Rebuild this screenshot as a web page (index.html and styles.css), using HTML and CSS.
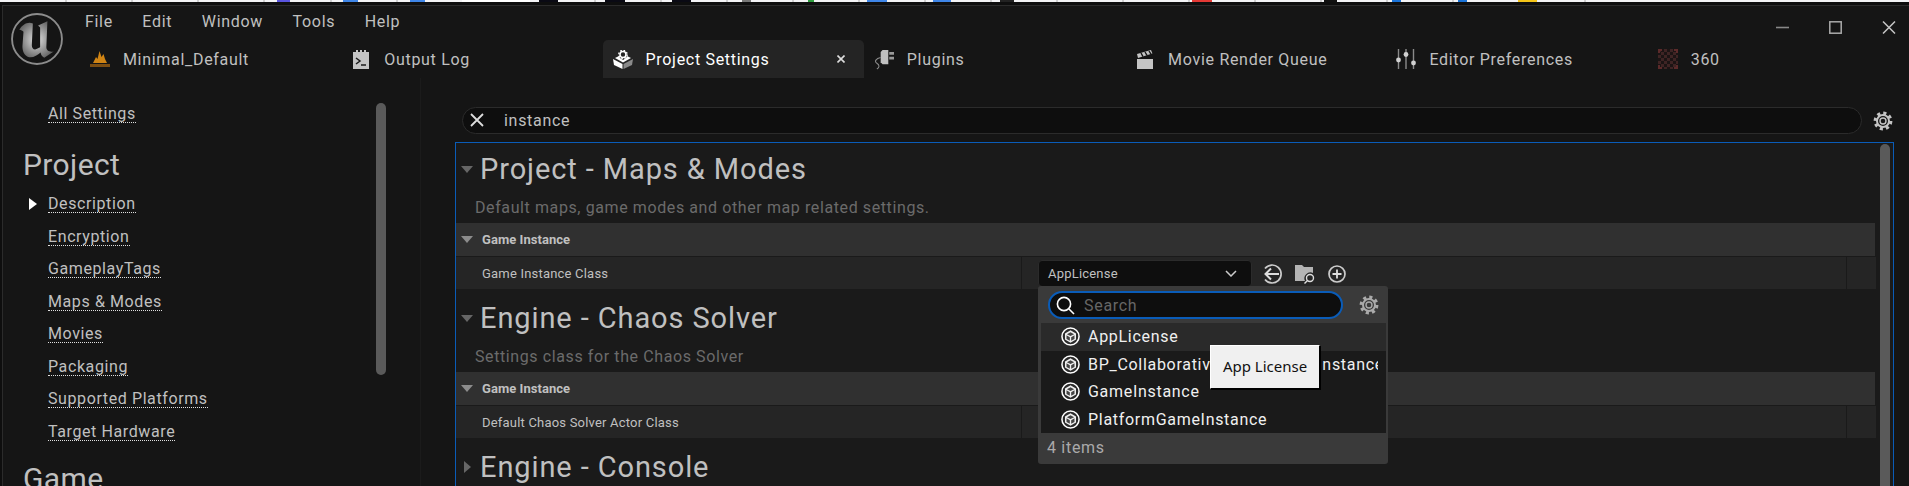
FILE: index.html
```html
<!DOCTYPE html>
<html lang="en">
  <head>
    <meta charset="UTF-8" />
    <title>Project Settings</title>
    <link rel="stylesheet" href="styles.css">
  </head>
  <body>
    <svg width="0" height="0" class="defs">
      <defs>
        <symbol id="gear" viewBox="0 0 20 20">
          <circle cx="10" cy="10" r="7.6" fill="none" stroke="currentColor" stroke-width="3.6" stroke-dasharray="3 2.97"/>
          <circle cx="10" cy="10" r="6" fill="none" stroke="currentColor" stroke-width="2"/>
          <circle cx="10" cy="10" r="3" fill="none" stroke="currentColor" stroke-width="1.4"/>
        </symbol>
        <symbol id="cube" viewBox="0 0 20 20">
          <circle cx="10" cy="10" r="9" fill="#2b2b2b" stroke="#fff" stroke-width="1.6"/>
          <path d="M10 3.500 15.800 6.800 15.800 13.200 10 16.500 4.200 13.200 4.200 6.800Z" fill="#f0f0f0"/>
          <path d="M10 5.400 13.800 7.500 10 9.600 6.200 7.500ZM5.800 8.700 9.300 10.700 9.300 14.600 5.800 12.500ZM14.200 8.700 10.700 10.700 10.700 14.600 14.200 12.500Z" fill="#444"/>
        </symbol>
      </defs>
    </svg>

    <svg class="ruler" width="1909" height="2">
      <rect width="1909" height="2" fill="#f3f3f5"/>
      <path d="M66 0v2M132 0v2M198 0v2M264 0v2M331 0v2M397 0v2M463 0v2M529 0v2M595 0v2M661 0v2M727 0v2M793 0v2M859 0v2M925 0v2M991 0v2M1057 0v2M1123 0v2M1189 0v2M1255 0v2M1321 0v2M1387 0v2M1453 0v2M1519 0v2M1585 0v2" stroke="#aaa"/>
      <rect x="277" width="13" height="2" fill="#5a55e0"/>
      <rect x="343" width="15" height="2" fill="#3f86e8"/>
      <rect x="410" width="15" height="2" fill="#3f86e8"/>
      <rect x="462" width="68" height="2" fill="#fff"/>
      <rect x="539" width="19" height="2" fill="#0a0a14"/>
      <rect x="605" width="20" height="2" fill="#0a0a14"/>
      <rect x="672" width="19" height="2" fill="#0a0a14"/>
      <rect x="742" width="9" height="2" fill="#777"/>
      <rect x="808" width="6" height="2" fill="#2e9e3e"/>
      <rect x="867" width="20" height="2" fill="#3f86e8"/>
      <rect x="933" width="18" height="2" fill="#3f86e8"/>
      <rect x="1000" width="14" height="2" fill="#222"/>
      <rect x="1192" width="20" height="2" fill="#e53935"/>
      <rect x="1324" width="13" height="2" fill="#111"/>
      <rect x="1392" width="9" height="2" fill="#1a73d8"/>
      <rect x="1458" width="9" height="2" fill="#1a73d8"/>
      <rect x="1518" width="19" height="2" fill="#f5c518"/>
    </svg>

    <div class="window">
      <header class="titlebar">
        <div class="logo">
          <svg width="52" height="52" viewBox="0 0 50 50">
            <defs>
              <radialGradient id="logoFill" cx="50%" cy="50%" r="55%">
                <stop offset="0" stop-color="#e2e2e2"/>
                <stop offset="1" stop-color="#666"/>
              </radialGradient>
            </defs>
            <circle cx="25" cy="25" r="24" fill="none" stroke="#8c8c8c" stroke-width="1.8"/>
            <path d="M8 16C11 11 16 8 21 10L20 31C20 35 23 36 26 34L28 33 28 14 26 12 35 8 34 33C34 36 37 38 41 37L32 43C30 42 28.5 40 28.5 38 25 41 20 44 16 42 12 40 11 36 11 32L12 18C11 17 10 16 8 16Z" fill="url(#logoFill)"/>
          </svg>
        </div>
        <div class="titlebar-main">
          <div class="menu-row">
            <nav class="menu">
              <span>File</span>
              <span>Edit</span>
              <span>Window</span>
              <span>Tools</span>
              <span>Help</span>
            </nav>
            <div class="window-controls">
              <svg width="13" height="12" viewBox="0 0 13 12"><path d="M0 6.500h13" stroke="#888" stroke-width="1.600"/></svg>
              <svg width="13" height="13" viewBox="0 0 13 13"><rect x=".8" y=".8" width="11.400" height="11.400" fill="none" stroke="#aaa" stroke-width="1.500"/></svg>
              <svg width="14" height="13" viewBox="0 0 14 13"><path d="M1 .5 13 12.500M13 .5 1 12.500" stroke="#c4c4c4" stroke-width="1.500"/></svg>
            </div>
          </div>
          <div class="tabs">
            <div class="tab">
              <svg class="tab-icon" width="20" height="16" viewBox="0 0 20 16">
                <path d="M3 12 6 6 7.500 8 9.500 0 11.500 6 13.500 3 15 8 17 12Z" fill="#d08414"/>
                <path d="M0 13h20v3H0Z" fill="#7d4e12"/>
              </svg>
              <span>Minimal_Default</span>
            </div>
            <div class="tab">
              <svg class="tab-icon" width="16" height="19" viewBox="0 0 16 19">
                <path d="M0 2h3V0h2v2h2V0h2v2h2V0h2v2h3v17H0Z" fill="#c4c4c4"/>
                <path d="M3 8 7 11 3 14M8 15h5" fill="none" stroke="#1a1a1a" stroke-width="1.500"/>
              </svg>
              <span>Output Log</span>
            </div>
            <div class="tab active">
              <svg class="tab-icon" width="20" height="19" viewBox="0 0 20 19">
                <path d="M0 9 9.500 14V19L1 15Z" fill="#fff"/>
                <path d="M20 9 10.500 14V19L19 15Z" fill="#8a8a8a"/>
                <path d="M2 8 6 6 7 8 10 10 13 8 14 6 18 8 10 12.500Z" fill="#fff"/>
                <circle cx="10" cy="4.500" r="3" fill="none" stroke="#fff" stroke-width="1.600"/>
                <circle cx="10" cy="4.500" r="4.200" fill="none" stroke="#fff" stroke-width="1.300" stroke-dasharray="1.600 1.700"/>
              </svg>
              <span>Project Settings</span>
              <svg class="tab-close" width="8" height="8" viewBox="0 0 8 8"><path d="M.5.5 7.500 7.500M7.500.5 .5 7.500" stroke="#ddd" stroke-width="1.600"/></svg>
            </div>
            <div class="tab">
              <svg class="tab-icon" width="20" height="21" viewBox="0 0 21 22">
                <path d="M7 3 9 1h6v15H9L7 14Z" fill="#c0c0c0"/>
                <path d="M16 3h5v3h-5ZM16 8h5v3h-5Z" fill="#999"/>
                <path d="M7 9C2 10 0 13 3 15 6 17 6 19 3 21" fill="none" stroke="#8a8a8a" stroke-width="1.100"/>
              </svg>
              <span>Plugins</span>
            </div>
            <div class="tab">
              <svg class="tab-icon" width="16" height="19" viewBox="0 0 16 19">
                <path d="M0 9h16v10H0Z" fill="#c4c4c4"/>
                <path d="M0 4 14 0 15.400 3.600 1 8Z" fill="#c4c4c4"/>
                <path d="M4 3 6 6.600M8 2 10 5.400M12 1 14 4.200" stroke="#151515" stroke-width="1.400"/>
              </svg>
              <span>Movie Render Queue</span>
            </div>
            <div class="tab">
              <svg class="tab-icon" width="20" height="20" viewBox="0 0 20 20">
                <path d="M2.500 0v20M10 0v20M17.500 0v20" stroke="#8a8a8a" stroke-width="1.400"/>
                <circle cx="2.500" cy="11" r="2.400" fill="#d0d0d0"/>
                <circle cx="10" cy="5.500" r="2.400" fill="#d0d0d0"/>
                <circle cx="17.500" cy="14" r="2.400" fill="#d0d0d0"/>
              </svg>
              <span>Editor Preferences</span>
            </div>
            <div class="tab">
              <svg class="tab-icon" width="20" height="20" viewBox="0 0 20 20">
                <defs>
                  <pattern id="check" width="6" height="6" patternUnits="userSpaceOnUse">
                    <rect width="6" height="6" fill="#1c1414"/>
                    <rect width="3" height="3" fill="#3f2424"/>
                    <rect x="3" y="3" width="3" height="3" fill="#3f2424"/>
                  </pattern>
                </defs>
                <rect width="20" height="20" fill="url(#check)"/>
                <path d="M0 0h4v2H2v2H0ZM16 0h4v4h-2V2h-2ZM0 16h2v2h2v2H0ZM20 16v4h-4v-2h2v-2Z" fill="#5c2a2a"/>
              </svg>
              <span>360</span>
            </div>
          </div>
        </div>
      </header>

      <div class="content">
        <aside class="sidebar">
          <div class="sidebar-scroll"></div>
          <div class="nav-item"><a>All Settings</a></div>
          <h2 class="nav-heading">Project</h2>
          <div class="nav-item current"><i class="nav-arrow"></i><a>Description</a></div>
          <div class="nav-item"><a>Encryption</a></div>
          <div class="nav-item"><a>GameplayTags</a></div>
          <div class="nav-item"><a>Maps &amp; Modes</a></div>
          <div class="nav-item"><a>Movies</a></div>
          <div class="nav-item"><a>Packaging</a></div>
          <div class="nav-item"><a>Supported Platforms</a></div>
          <div class="nav-item"><a>Target Hardware</a></div>
          <h2 class="nav-heading last">Game</h2>
        </aside>

        <main class="main">
          <div class="filter-row">
            <div class="filter">
              <svg width="14" height="14" viewBox="0 0 14 14"><path d="M1 1 13 13M13 1 1 13" stroke="#ddd" stroke-width="1.800"/></svg>
              <span>instance</span>
            </div>
            <svg class="filter-gear" width="20" height="20"><use href="#gear"/></svg>
          </div>

          <div class="panel">
            <div class="panel-scroll"></div>

            <section class="section">
              <div class="section-title"><i class="arrow-down"></i><h1>Project - Maps &amp; Modes</h1></div>
              <p class="section-desc">Default maps, game modes and other map related settings.</p>
              <div class="category"><i class="arrow-down cat"></i><b>Game Instance</b></div>
              <div class="property">
                <div class="prop-name">Game Instance Class</div>
                <div class="prop-value">
                  <div class="combo">
                    <span>AppLicense</span>
                    <svg width="12" height="7" viewBox="0 0 12 7"><path d="M1 1 6 6 11 1" fill="none" stroke="#ccc" stroke-width="1.500"/></svg>
                  </div>
                  <svg class="prop-icon" width="20" height="20" viewBox="0 0 20 20">
                    <path d="M3 4.500A9 9 0 1 1 3 15.500" fill="none" stroke="#ccc" stroke-width="1.700"/>
                    <path d="M17 10H4M9 4.500 3.500 10 9 15.500" fill="none" stroke="#ddd" stroke-width="2"/>
                  </svg>
                  <svg class="prop-icon" width="20" height="20" viewBox="0 0 20 20">
                    <path d="M0 1h7l2 2h9v6a6 6 0 0 0-8 8H0Z" fill="#b4b4b4"/>
                    <circle cx="15" cy="14" r="3.500" fill="none" stroke="#ddd" stroke-width="1.400"/>
                    <path d="M12.500 16.500 9.500 19.500" stroke="#ddd" stroke-width="1.400"/>
                  </svg>
                  <svg class="prop-icon" width="18" height="18" viewBox="0 0 18 18">
                    <circle cx="9" cy="9" r="8" fill="none" stroke="#ccc" stroke-width="1.700"/>
                    <path d="M9 4.500v9M4.500 9h9" stroke="#ddd" stroke-width="1.800"/>
                  </svg>
                </div>
                <div class="prop-reset"></div>
              </div>
            </section>

            <section class="section">
              <div class="section-title"><i class="arrow-down"></i><h1>Engine - Chaos Solver</h1></div>
              <p class="section-desc">Settings class for the Chaos Solver</p>
              <div class="category"><i class="arrow-down cat"></i><b>Game Instance</b></div>
              <div class="property">
                <div class="prop-name">Default Chaos Solver Actor Class</div>
                <div class="prop-value"></div>
                <div class="prop-reset"></div>
              </div>
            </section>

            <section class="section">
              <div class="section-title"><i class="arrow-right"></i><h1>Engine - Console</h1></div>
            </section>

            <div class="picker">
              <div class="picker-search">
                <div class="picker-input">
                  <svg width="19" height="19" viewBox="0 0 19 19">
                    <circle cx="8" cy="8" r="6.600" fill="none" stroke="#fff" stroke-width="1.600"/>
                    <path d="M13 13 18 18" stroke="#fff" stroke-width="1.600"/>
                  </svg>
                  <span>Search</span>
                </div>
                <svg class="picker-gear" width="20" height="20"><use href="#gear"/></svg>
              </div>
              <ul class="picker-list">
                <li class="hover"><svg width="19" height="19"><use href="#cube"/></svg><span>AppLicense</span></li>
                <li><svg width="19" height="19"><use href="#cube"/></svg><span>BP_CollaborativeViewerGameInstance</span></li>
                <li><svg width="19" height="19"><use href="#cube"/></svg><span>GameInstance</span></li>
                <li><svg width="19" height="19"><use href="#cube"/></svg><span>PlatformGameInstance</span></li>
              </ul>
              <div class="picker-count">4 items</div>
            </div>

            <div class="tooltip">App License</div>
          </div>
        </main>
      </div>
    </div>
  </body>
</html>
```

FILE: styles.css
```css
html, body {
  margin: 0;
  height: 486px;
  overflow: hidden;
}

body {
  font-family: Roboto, "Liberation Sans", sans-serif;
  background-color: #0e0e0e;
  color: #c0c0c0;
}

.defs {
  position: absolute;
}

.ruler {
  display: block;
}

.window {
  height: 481px;
  margin: 3px 0 0 2px;
  border-top: 1px solid #2b2b2b;
  border-left: 1px solid #2b2b2b;
  background-color: #151515;
  display: flex;
  flex-direction: column;
}

/* title bar */

.titlebar {
  display: flex;
  height: 72px;
}

.logo {
  width: 81px;
  padding: 7px 0 0 8px;
  box-sizing: border-box;
}

.logo svg {
  display: block;
}

.titlebar-main {
  flex: 1;
  display: flex;
  flex-direction: column;
}

.menu-row {
  height: 30px;
  margin-bottom: 4px;
  display: flex;
  justify-content: space-between;
  align-items: center;
}

.menu {
  display: flex;
  gap: 29.5px;
  padding-left: 5px;
  font-size: 16px;
  letter-spacing: 0.7px;
}

.window-controls {
  display: flex;
  align-items: center;
  gap: 40px;
  padding: 12px 13px 0 0;
}

.tabs {
  display: flex;
}

.tab {
  width: 261.3px;
  height: 38px;
  padding-left: 10px;
  box-sizing: border-box;
  display: flex;
  align-items: center;
  font-size: 16px;
  letter-spacing: 0.7px;
}

/* every tab icon sits centred in the same 20px box */
.tab-icon {
  width: 20px;
  margin-right: 13px;
  flex: none;
}

.tab.active {
  background-color: #242424;
  color: #fff;
  border-radius: 5px 5px 0 0;
}

.tab-close {
  margin-left: auto;
  margin-right: 19px;
}

/* left navigation */

.content {
  flex: 1;
  display: flex;
  min-height: 0;
}

.sidebar {
  position: relative;
  width: 418px;
  padding-top: 19.5px;
  box-sizing: border-box;
  border-right: 1px solid #1b1b1b;
  overflow: hidden;
  flex: none;
}

.sidebar-scroll {
  position: absolute;
  left: 373px;
  top: 25px;
  width: 10px;
  height: 272px;
  border-radius: 5px;
  background-color: #5a5a5a;
}

.nav-item {
  height: 32.5px;
  padding-left: 45px;
  display: flex;
  align-items: center;
  font-size: 16px;
  letter-spacing: 0.6px;
}

.nav-item.current {
  padding-left: 26px;
}

.nav-item a {
  line-height: 17px;
  border-bottom: 1px dotted #e0e0e0;
}

.nav-arrow {
  width: 0;
  height: 0;
  margin-right: 11px;
  border-left: 8px solid #fff;
  border-top: 6px solid transparent;
  border-bottom: 6px solid transparent;
}

.nav-heading {
  height: 47px;
  margin: 0;
  padding: 11px 0 0 20px;
  font-size: 30px;
  font-weight: 400;
  letter-spacing: 0.4px;
  line-height: 48px;
}

.nav-heading.last {
  padding-top: 7px;
}

/* settings area */

.main {
  flex: 1;
  min-width: 0;
  padding: 29px 15px 0 34px;
  display: flex;
  flex-direction: column;
}

.filter-row {
  display: flex;
  align-items: center;
  margin-bottom: 8px;
}

.filter {
  flex: 1;
  height: 25px;
  margin-left: 7px;
  padding: 0 0 1px 7px;
  box-sizing: content-box;
  height: 24px;
  display: flex;
  align-items: center;
  gap: 20px;
  background-color: #0e0e0e;
  border: 1px solid #2b2b2b;
  border-radius: 14px;
  font-size: 16px;
  letter-spacing: 0.7px;
}

.filter-gear {
  margin: 0 1px 0 11px;
  color: #c4c4c4;
  flex: none;
}

.panel {
  position: relative;
  flex: 1;
  padding-right: 17px;
  background-color: #1a1a1a;
  border: 1px solid #0a5cb8;
  border-bottom: none;
  overflow: hidden;
}

.panel-scroll {
  position: absolute;
  right: 3px;
  top: 1px;
  width: 10px;
  height: 400px;
  border-radius: 5px;
  background-color: #5a5a5a;
}

.section {
  height: 149px;
}

.section-title {
  height: 52px;
  display: flex;
  align-items: center;
}

.section-title h1 {
  margin: 0;
  font-size: 29px;
  font-weight: 400;
  letter-spacing: 0.9px;
}

.arrow-down {
  width: 0;
  height: 0;
  margin: 0 7px 0 5px;
  border-left: 6px solid transparent;
  border-right: 6px solid transparent;
  border-top: 7px solid #666;
}

.arrow-right {
  width: 0;
  height: 0;
  margin: 0 9px 0 8px;
  border-top: 6px solid transparent;
  border-bottom: 6px solid transparent;
  border-left: 7px solid #666;
}

.section-desc {
  height: 28px;
  margin: 0;
  padding-left: 19px;
  font-size: 16px;
  line-height: 26px;
  letter-spacing: 0.6px;
  color: #6b6b6b;
}

.category {
  height: 33px;
  margin-right: 1px;
  display: flex;
  align-items: center;
  background-color: #303030;
  font-size: 13px;
}

.arrow-down.cat {
  margin-right: 9px;
  border-top-color: #8c8c8c;
}

.category b {
  letter-spacing: 0.05px;
}

.property {
  height: 32px;
  margin-top: 1px;
  display: flex;
  background-color: #252525;
  font-size: 13px;
}

.prop-name {
  width: 566px;
  padding-left: 26px;
  box-sizing: border-box;
  line-height: 34px;
  letter-spacing: 0.2px;
  border-right: 1px solid #1a1a1a;
}

.prop-value {
  flex: 1;
  padding: 1px 0 0 16px;
  display: flex;
  align-items: center;
  gap: 13px;
}

.prop-reset {
  width: 29px;
  border-left: 1px solid #1a1a1a;
}

.combo {
  width: 214px;
  height: 27px;
  padding: 0 14px 0 9px;
  box-sizing: border-box;
  margin-right: -3px;
  display: flex;
  justify-content: space-between;
  align-items: center;
  background-color: #0e0e0e;
  border: 1px solid #2b2b2b;
  border-radius: 4px;
  letter-spacing: 0.2px;
}

.prop-icon {
  flex: none;
}

/* class picker, opens over the rows */

.picker {
  position: absolute;
  left: 582px;
  top: 143px;
  width: 350px;
  height: 178px;
  padding: 5px 2px 0 3px;
  box-sizing: border-box;
  background-color: #3a3a3a;
  border-radius: 3px;
  font-size: 16px;
  letter-spacing: 0.7px;
  display: flex;
  flex-direction: column;
}

.picker-search {
  height: 32px;
  flex: none;
  display: flex;
  align-items: flex-start;
}

.picker-input {
  width: 295px;
  height: 28px;
  margin-left: 7px;
  padding-left: 6px;
  box-sizing: border-box;
  display: flex;
  align-items: center;
  gap: 9px;
  background-color: #0e0e0e;
  border: 2px solid #0a5cb8;
  border-radius: 14px;
  color: #666;
}

.picker-gear {
  margin: 4px 0 0 16px;
  color: #aaa;
}

.picker-list {
  list-style: none;
  margin: 0;
  padding: 0;
  background-color: #1a1a1a;
}

.picker-list li {
  height: 27.5px;
  padding: 0 8px 0 20px;
  display: flex;
  align-items: center;
  gap: 8px;
  color: #f0f0f0;
}

.picker-list li svg {
  flex: none;
}

.picker-list li span {
  white-space: nowrap;
  overflow: hidden;
}

.picker-list li.hover {
  background-color: #2a2a2a;
}

.picker-count {
  padding: 5px 0 0 6px;
  line-height: 20px;
  color: #aaa;
}

.tooltip {
  position: absolute;
  left: 754px;
  top: 202px;
  width: 110px;
  height: 44px;
  padding-bottom: 2px;
  box-sizing: border-box;
  display: flex;
  align-items: center;
  justify-content: center;
  background-color: #f0f0f0;
  border: 1px solid;
  border-color: #fff #000 #000 #fff;
  box-shadow: 1px 1px 0 #000;
  font-family: "Noto Sans", sans-serif;
  font-size: 15px;
  color: #111;
}
```
